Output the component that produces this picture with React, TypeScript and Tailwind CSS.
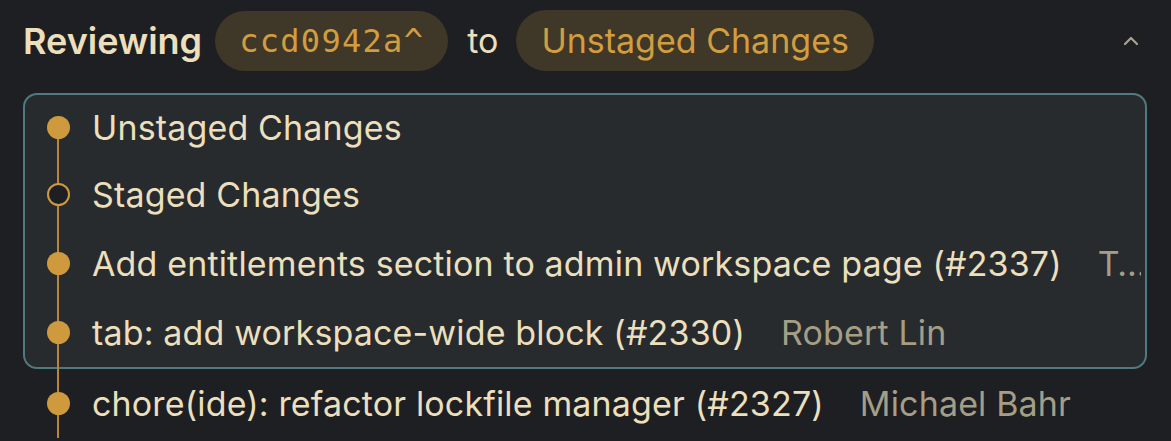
import { ChevronUp } from 'lucide-react'

const ROWS = [
  { msg: 'Unstaged Changes', author: '', hollow: false, first: true },
  { msg: 'Staged Changes', author: '', hollow: true },
  { msg: 'Add entitlements section to admin workspace page (#2337)', author: 'Tomas Reimers' },
  { msg: 'tab: add workspace-wide block (#2330)', author: 'Robert Lin', last: true },
]

function Row({ msg, author, hollow, first, crossBorder }: { msg: string; author: string; hollow?: boolean; first?: boolean; crossBorder?: boolean }) {
  return (
    <div className={`relative flex items-center min-w-0 ${first ? 'h-[65px]' : 'h-[69px]'}`}>
      <div className="relative flex h-full w-[67px] shrink-0 items-center justify-center">
        <div className={`absolute left-[32px] w-[2px] bg-[#b8863a] ${first ? 'top-1/2' : 'top-0'} ${crossBorder ? '-bottom-[2px]' : 'bottom-0'}`} />
        {hollow ? (
          <div className="relative h-[23px] w-[23px] rounded-full border-2 border-[#cf9a3e] bg-[#1e1f22]" />
        ) : (
          <div className="relative h-[23px] w-[23px] rounded-full bg-[#cf9a3e]" />
        )}
      </div>
      <div className="flex min-w-0 items-center gap-[36px] pr-[2px] text-[34px] tracking-[0.15px] whitespace-nowrap">
        <span className="shrink-0 text-[#ebdfbd]">{msg}</span>
        {author && <span className="min-w-0 truncate text-[#a59e86]">{author}</span>}
      </div>
    </div>
  )
}

export default function App() {
  return (
    <div className="h-[441px] w-[1171px] overflow-hidden bg-[#1e1f22] pl-[23px] pr-[24px] font-['Inter',sans-serif]">
      <div className="flex h-[93px] items-center pb-[12px]">
        <span className="text-[36px] font-semibold text-[#ebdfbd]">Reviewing</span>
        <span className="ml-[13px] rounded-full bg-[#3f3727] px-[24px] py-[6px] font-['DejaVu_Sans_Mono',monospace] text-[32px] tracking-[1.3px] text-[#d29d3f]">ccd0942a^</span>
        <span className="ml-[19px] text-[34px] text-[#ebdfbd]">to</span>
        <span className="ml-[18px] rounded-full bg-[#3f3727] px-[25px] py-[5px] text-[34px] text-[#d29d3f]">Unstaged Changes</span>
        <ChevronUp className="ml-auto mr-[4px] h-[24px] w-[24px] text-[#a8a48f]" strokeWidth={2.2} />
      </div>
      <div className="rounded-[14px] border-2 border-[#4e7a80] bg-[#282b2e] pr-[2px]">
        {ROWS.map((r) => (
          <Row key={r.msg} msg={r.msg} author={r.author} hollow={r.hollow} first={r.first} crossBorder={r.last} />
        ))}
      </div>
      <div className="pl-[2px]">
        <Row msg="chore(ide): refactor lockfile manager (#2327)" author="Michael Bahr" />
      </div>
    </div>
  )
}
